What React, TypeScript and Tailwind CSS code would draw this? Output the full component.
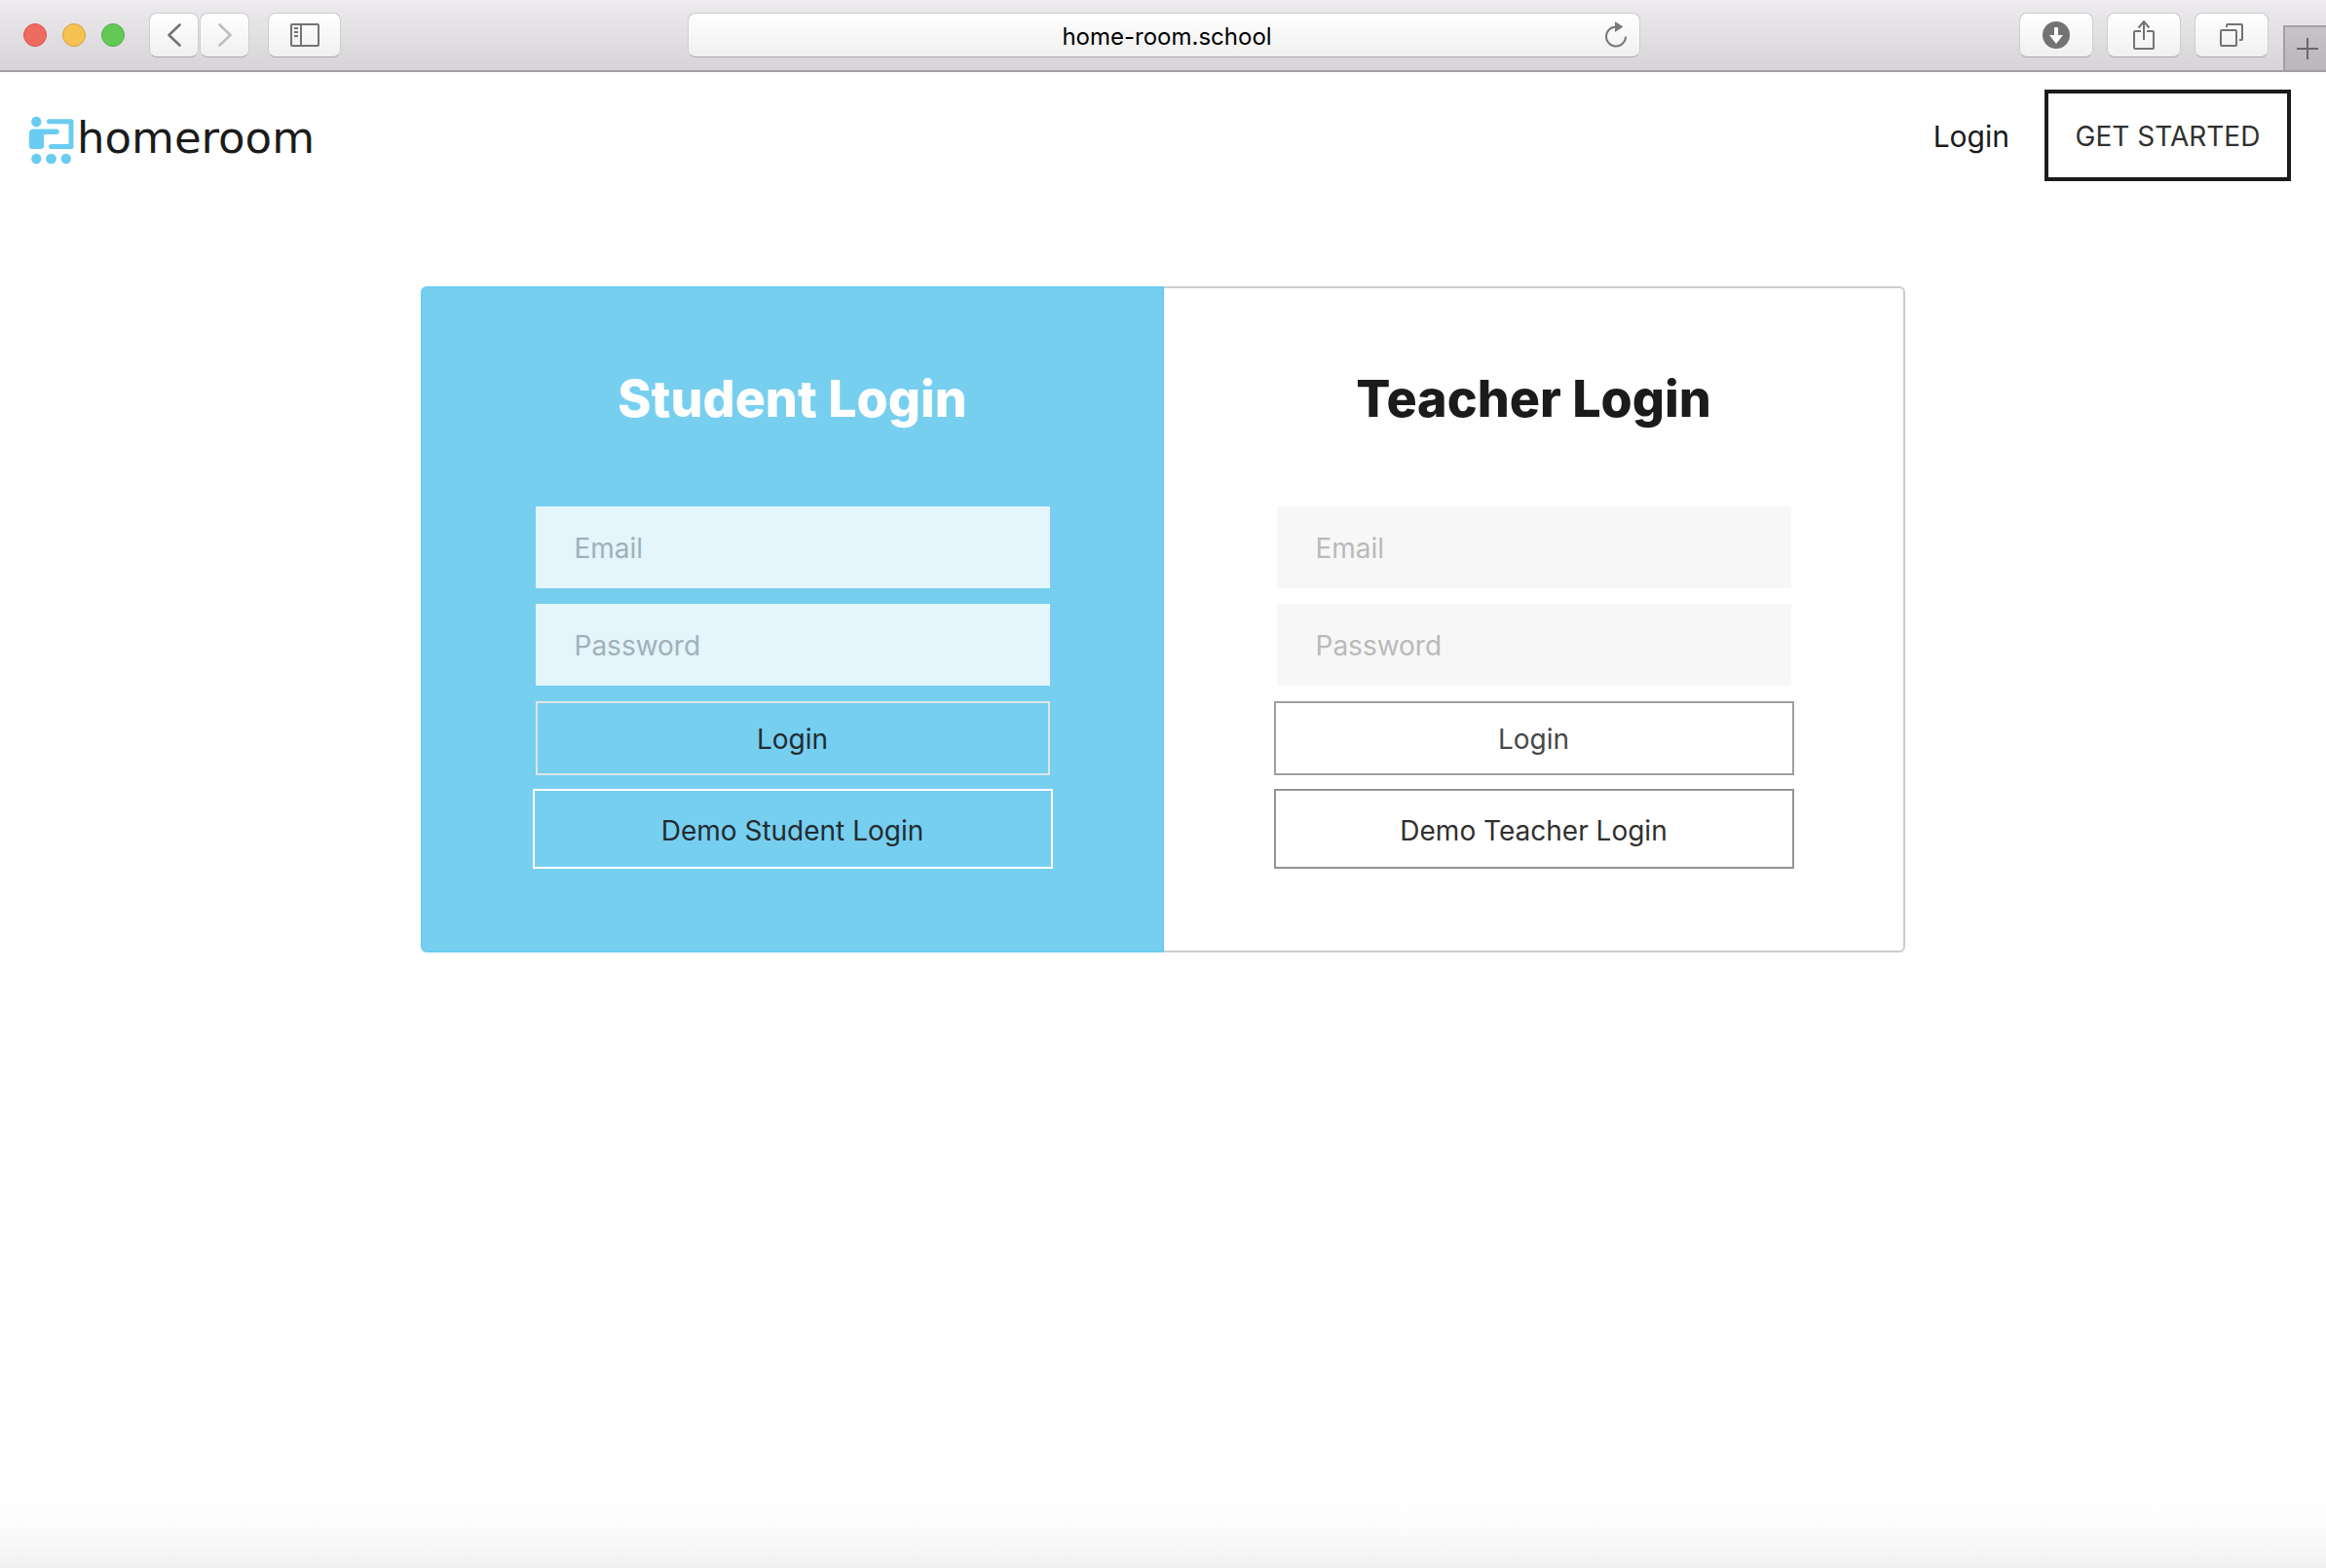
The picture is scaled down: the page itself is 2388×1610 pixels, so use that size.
import React from "react";

const toolButton =
  "flex h-[46px] items-center justify-center rounded-lg border border-[#cfcdd0] border-b-[#a9a7aa] bg-gradient-to-b from-white to-[#f0f0f0] text-[#737373]";

function Toolbar() {
  return (
    <header className="flex h-[74px] items-stretch border-b-2 border-[#a19fa3] bg-gradient-to-b from-[#edebee] to-[#d6d4d7]">
      <div className="flex w-[706px] items-center pl-6">
        <div className="flex gap-4">
          <span className="size-6 rounded-full border border-[#d9574d] bg-[#ee6b60]" />
          <span className="size-6 rounded-full border border-[#d9a03c] bg-[#f6c251]" />
          <span className="size-6 rounded-full border border-[#4fae44] bg-[#63c956]" />
        </div>
        <div className="ml-[25px] flex gap-px">
          <button type="button" aria-label="Back" className={`${toolButton} w-[51px]`}>
            <svg width="16" height="26" viewBox="0 0 16 26" fill="none" stroke="currentColor" strokeWidth="2.6" strokeLinecap="round" strokeLinejoin="round">
              <path d="M13.5 2.5 2.5 13l11 10.5" />
            </svg>
          </button>
          <button type="button" aria-label="Forward" className={`${toolButton} w-[51px]`}>
            <svg width="16" height="26" viewBox="0 0 16 26" fill="none" stroke="#bfbfbf" strokeWidth="2.6" strokeLinecap="round" strokeLinejoin="round">
              <path d="M2.5 2.5 13.5 13l-11 10.5" />
            </svg>
          </button>
        </div>
        <button type="button" aria-label="Show sidebar" className={`${toolButton} ml-[19px] w-[75px]`}>
          <svg width="30" height="24" viewBox="0 0 30 24" fill="none" stroke="currentColor" strokeWidth="2">
            <rect x="1" y="1" width="28" height="22" rx="1" />
            <path d="M11 1v22M4 5h4M4 9h4M4 13h4" />
          </svg>
        </button>
      </div>
      <div className="flex flex-1 items-center">
        <div className="relative flex h-[46px] flex-1 items-center rounded-lg border border-[#cfcdd0] border-b-[#a9a7aa] bg-gradient-to-b from-white to-[#f0f0f0]">
          <input
            type="text"
            aria-label="Address"
            defaultValue="home-room.school"
            className="w-full bg-transparent pt-1 pl-1.5 text-center text-2xl leading-8 text-black outline-none"
          />
          <button type="button" aria-label="Reload" className="absolute right-3 text-[#7a7a7a]">
            <svg width="24" height="28" viewBox="0 0 24 28" fill="none">
              <path d="M12 5.5A10 10 0 1 0 22 15.5" stroke="currentColor" strokeWidth="2" />
              <path d="M11 0v11l8.5-5.5z" fill="currentColor" />
            </svg>
          </button>
        </div>
      </div>
      <div className="flex w-[704px] items-center justify-end">
        <div className="flex gap-[14px]">
          <button type="button" aria-label="Downloads" className={`${toolButton} w-[76px]`}>
            <svg width="28" height="28" viewBox="0 0 28 28">
              <circle cx="14" cy="14" r="14" fill="currentColor" />
              <path d="M12 6h4v8h5l-7 9-7-9h5z" fill="#fff" />
            </svg>
          </button>
          <button type="button" aria-label="Share" className={`${toolButton} w-[76px]`}>
            <svg width="22" height="32" viewBox="0 0 22 32" fill="none" stroke="currentColor" strokeWidth="2">
              <path d="M8 12H2q-1 0-1 1v16q0 1 1 1h18q1 0 1-1V13q0-1-1-1h-6M11 21V2M5.5 8.5 11 2l5.5 6.5" />
            </svg>
          </button>
          <button type="button" aria-label="Show all tabs" className={`${toolButton} w-[76px]`}>
            <svg width="24" height="24" viewBox="0 0 24 24" fill="none" stroke="currentColor" strokeWidth="2">
              <rect x="1" y="7" width="16" height="16" rx="1" />
              <path d="M7 4V2q0-1 1-1h14q1 0 1 1v14q0 1-1 1h-2" />
            </svg>
          </button>
        </div>
        <button
          type="button"
          aria-label="New tab"
          className="ml-[15px] flex h-[46px] w-11 items-center justify-end self-end border-t-2 border-l-2 border-[#a19fa3] bg-gradient-to-b from-[#c6c4c7] to-[#b9b7ba] pr-2 text-[#69676a]"
        >
          <svg width="22" height="22" viewBox="0 0 22 22" stroke="currentColor" strokeWidth="2">
            <path d="M11 0v22M0 11h22" />
          </svg>
        </button>
      </div>
    </header>
  );
}

function Logo() {
  return (
    <a href="#" className="flex items-center gap-px pt-[10px] text-[#1b1b1b]">
      <svg width="50" height="50" viewBox="0 0 50 50" fill="#6accf1">
        <ellipse cx="9.3" cy="6" rx="5.2" ry="5.4" />
        <path d="M6 13.5h24a2.7 2.7 0 0 1 0 5.500H17v12q0 3-3 3H5q-3 0-3-3V18q0-4.500 4-4.500z" />
        <path d="M22.500 5.800H45v25.700H24.500" fill="none" stroke="#6accf1" strokeWidth="5" strokeLinecap="round" strokeLinejoin="round" />
        <ellipse cx="9.3" cy="44" rx="5.2" ry="5.2" />
        <ellipse cx="24.5" cy="44" rx="5.4" ry="5.2" />
        <ellipse cx="39.8" cy="44" rx="5.2" ry="5.2" />
      </svg>
      <span className="pb-1 font-['DejaVu_Sans',sans-serif] text-[45px] leading-[50px]">homeroom</span>
    </a>
  );
}

type PanelProps = {
  title: string;
  demo: string;
  panel: string;
  heading: string;
  field: string;
  login: string;
  demoButton: string;
};

function LoginPanel({ title, demo, panel, heading, field, login, demoButton }: PanelProps) {
  const input = `h-[84px] w-full px-10 pt-0.5 text-[28px] outline-none ${field}`;
  return (
    <form className={`flex flex-1 flex-col items-center border-2 pt-[82px] pb-[84px] ${panel}`} onSubmit={(e) => e.preventDefault()}>
      <h2 className={`text-[52px] leading-[64px] font-extrabold ${heading}`}>{title}</h2>
      <div className="mt-[78px] flex w-[528px] flex-col gap-4">
        <input type="email" aria-label="Email" placeholder="Email" className={input} />
        <input type="password" aria-label="Password" placeholder="Password" className={input} />
      </div>
      <button type="submit" className={`mt-4 h-[76px] border-2 pt-0.5 text-[28px] ${login}`}>Login</button>
      <button type="button" className={`mt-[14px] h-[82px] w-[534px] border-2 pt-1 text-[28px] ${demoButton}`}>{demo}</button>
    </form>
  );
}

export default function App() {
  return (
    <div className="min-h-screen bg-[linear-gradient(to_top,#f0f0f0,#f7f7f7_20px,#fdfdfd_48px,#ffffff_80px)] font-['Inter',sans-serif]">
      <Toolbar />
      <nav className="flex items-start justify-between pt-[18px] pr-9 pl-7">
        <div className="flex h-[94px] items-center">
          <Logo />
        </div>
        <div className="flex items-center gap-9">
          <a href="#" className="pt-0.5 text-[30px] text-[#1b1b1b]">Login</a>
          <button type="button" className="h-[94px] w-[253px] border-4 border-[#1b1b1b] pt-0.5 text-[28px] text-[#303030]">GET STARTED</button>
        </div>
      </nav>
      <main className="mx-auto mt-[108px] flex w-full max-w-[1524px]">
        <LoginPanel
          title="Student Login"
          demo="Demo Student Login"
          panel="rounded-l-md border-[#6accf1] bg-[#77cff0]"
          heading="text-white"
          field="bg-[#e4f5fc] placeholder:text-[#a0b1b8]"
          login="w-[528px] border-[#e0e6e8] text-[#222c30]"
          demoButton="border-white text-[#222c30]"
        />
        <LoginPanel
          title="Teacher Login"
          demo="Demo Teacher Login"
          panel="rounded-r-md border-[#cdcdcd] border-l-0 bg-white"
          heading="text-[#1b1b1d]"
          field="bg-[#f7f7f7] placeholder:text-[#bababa]"
          login="w-[534px] border-[#a0a0a0] text-[#484848]"
          demoButton="border-[#949494] text-[#303030]"
        />
      </main>
    </div>
  );
}
